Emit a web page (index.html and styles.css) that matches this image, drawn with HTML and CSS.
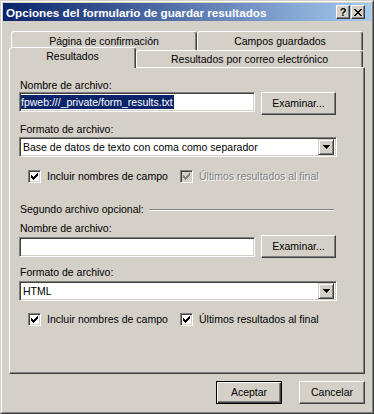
FILE: index.html
```html
<!DOCTYPE html>
<html>
	<head>
		<meta charset="utf-8">
		<title>Opciones del formulario de guardar resultados</title>
		<link rel="stylesheet" href="styles.css">
	</head>
	<body>
		<div class="window">
			<div class="frame">
				<div class="titlebar">
					<span class="title">Opciones del formulario de guardar resultados</span>
					<div class="caption-btns">
						<span class="cbtn help">?</span>
						<span class="cbtn close">
							<svg width="8" height="7" viewBox="0 0 8 7"><path d="M0 0h2v1H0z M6 0h2v1H6z M1 1h2v1H1z M5 1h2v1H5z M2 2h4v1H2z M3 3h2v1H3z M2 4h4v1H2z M1 5h2v1H1z M5 5h2v1H5z M0 6h2v1H0z M6 6h2v1H6z" fill="#000"/></svg>
						</span>
					</div>
				</div>
				<div class="client">
					<div class="tab-row back">
						<div class="tab w-conf">Página de confirmación</div>
						<div class="tab w-campos">Campos guardados</div>
					</div>
					<div class="tab-row front">
						<div class="tab selected w-res">Resultados</div>
						<div class="tab w-correo">Resultados por correo electrónico</div>
					</div>
					<div class="panel">
						<div class="label first">Nombre de archivo:</div>
						<div class="field-row">
							<div class="edit"><span class="sel">fpweb:///_private/form_results.txt</span></div>
							<button class="btn browse">Examinar...</button>
						</div>
						<div class="label">Formato de archivo:</div>
						<div class="combo">
							<span class="combo-text">Base de datos de texto con coma como separador</span>
							<span class="combo-btn"><svg width="7" height="4" viewBox="0 0 7 4"><path d="M0 0h7v1H0z M1 1h5v1H1z M2 2h3v1H2z M3 3h1v1H3z" fill="#000"/></svg></span>
						</div>
						<div class="checks">
							<div class="check-item">
								<span class="check"><svg width="7" height="7" viewBox="0 0 7 7"><path d="M0 2h1v3H0z M1 3h1v3H1z M2 4h1v3H2z M3 3h1v3H3z M4 2h1v3H4z M5 1h1v3H5z M6 0h1v3H6z"/></svg></span>
								<span>Incluir nombres de campo</span>
							</div>
							<div class="check-item disabled">
								<span class="check"><svg width="7" height="7" viewBox="0 0 7 7"><path d="M0 2h1v3H0z M1 3h1v3H1z M2 4h1v3H2z M3 3h1v3H3z M4 2h1v3H4z M5 1h1v3H5z M6 0h1v3H6z"/></svg></span>
								<span>Últimos resultados al final</span>
							</div>
						</div>

						<div class="group-head">
							<span>Segundo archivo opcional:</span>
							<span class="etched"></span>
						</div>
						<div class="label second">Nombre de archivo:</div>
						<div class="field-row">
							<div class="edit lower"></div>
							<button class="btn browse">Examinar...</button>
						</div>
						<div class="label">Formato de archivo:</div>
						<div class="combo lower">
							<span class="combo-text">HTML</span>
							<span class="combo-btn"><svg width="7" height="4" viewBox="0 0 7 4"><path d="M0 0h7v1H0z M1 1h5v1H1z M2 2h3v1H2z M3 3h1v1H3z" fill="#000"/></svg></span>
						</div>
						<div class="checks last">
							<div class="check-item">
								<span class="check"><svg width="7" height="7" viewBox="0 0 7 7"><path d="M0 2h1v3H0z M1 3h1v3H1z M2 4h1v3H2z M3 3h1v3H3z M4 2h1v3H4z M5 1h1v3H5z M6 0h1v3H6z"/></svg></span>
								<span>Incluir nombres de campo</span>
							</div>
							<div class="check-item">
								<span class="check"><svg width="7" height="7" viewBox="0 0 7 7"><path d="M0 2h1v3H0z M1 3h1v3H1z M2 4h1v3H2z M3 3h1v3H3z M4 2h1v3H4z M5 1h1v3H5z M6 0h1v3H6z"/></svg></span>
								<span>Últimos resultados al final</span>
							</div>
						</div>
					</div>
					<div class="actions">
						<button class="btn default">Aceptar</button>
						<button class="btn">Cancelar</button>
					</div>
				</div>
			</div>
		</div>
	</body>
</html>
```

FILE: styles.css
```css
*{
	margin: 0;
	padding: 0;
	box-sizing: border-box;
}
body{
	width: 374px;
	height: 414px;
	background: #d4d0c8;
	font-family: "Liberation Sans", Arial, sans-serif;
	font-size: 10.5px;
	line-height: 13px;
	color: #000;
}
/* window frame */
.window{
	width: 374px;
	height: 414px;
	border: 1px solid;
	border-color: #d4d0c8 #404040 #404040 #d4d0c8;
}
.frame{
	height: 100%;
	border: 1px solid;
	border-color: #fff #808080 #808080 #fff;
	padding: 1px;
	display: flex;
	flex-direction: column;
}
.titlebar{
	height: 18px;
	flex: none;
	display: flex;
	align-items: center;
	padding: 0 6px 0 3px;
	background: linear-gradient(to right, #0a246a, #a6caf0);
}
.title{
	flex: 1;
	color: #fff;
	font-weight: bold;
	font-size: 11.7px;
	white-space: nowrap;
}
.caption-btns{
	display: flex;
	gap: 1px;
}
.cbtn{
	width: 14px;
	height: 14px;
	display: flex;
	align-items: center;
	justify-content: center;
	background: #d4d0c8;
	border: 1px solid;
	border-color: #fff #404040 #404040 #fff;
	box-shadow: inset -1px -1px #808080;
}
.cbtn.help{
	font-weight: bold;
	font-size: 11px;
	line-height: 12px;
}
/* client area */
.client{
	flex: 1;
	padding: 10px 6px 0 6px;
}
.tab-row{
	display: flex;
}
.tab-row.back{
	height: 19px;
	margin-left: 2px;
}
.tab-row.front{
	height: 17px;
	position: relative;
	z-index: 1;
}
.tab{
	height: 100%;
	display: flex;
	align-items: center;
	justify-content: center;
	background: #d4d0c8;
	border: 1px solid;
	border-bottom: none;
	border-color: #fff #404040 #fff #fff;
	border-radius: 3px 3px 0 0;
	box-shadow: inset -1px 0 #808080;
	white-space: nowrap;
}
.w-conf{ width: 186px; }
.w-campos{ width: 166px; }
.w-res{ width: 127px; }
.w-correo{ width: 227px; }
.tab.selected{
	height: 21px;
	margin-top: -3px;
	padding-bottom: 3px;
}
.panel{
	height: 307px;
	padding: 0 0 0 9px;
	border: 1px solid;
	border-color: #fff #404040 #404040 #fff;
	box-shadow: inset -1px -1px #808080;
}
.label{
	padding-left: 1px;
	margin-top: 8px;
}
.label.first{
	margin-top: 11px;
}
.label.second{
	margin-top: 6px;
}
.field-row{
	display: flex;
	align-items: flex-start;
	gap: 6px;
}
/* sunken controls */
.edit,.combo,.check{
	background: #fff;
	border: 1px solid;
	border-color: #808080 #fff #fff #808080;
	box-shadow: inset 1px 1px #404040, inset -1px -1px #d4d0c8;
}
.edit{
	width: 236px;
	height: 20px;
	display: flex;
	align-items: center;
	padding-left: 1px;
}
.edit.lower{
	margin-top: 2px;
}
.sel{
	background: #0a246a;
	color: #fff;
	line-height: 14px;
	padding-right: 1px;
}
.btn{
	font: inherit;
	color: #000;
	background: #d4d0c8;
	border: 1px solid;
	border-color: #fff #404040 #404040 #fff;
	box-shadow: inset -1px -1px #808080;
	height: 23px;
}
.btn.browse{
	width: 75px;
}
.combo{
	width: 318px;
	height: 20px;
	margin-top: 1px;
	display: flex;
	align-items: center;
	padding: 2px 2px 2px 3px;
}
.combo.lower{
	margin-top: 2px;
}
.combo-text{
	flex: 1;
}
.combo-btn{
	width: 16px;
	height: 16px;
	display: flex;
	align-items: center;
	justify-content: center;
	background: #d4d0c8;
	border: 1px solid;
	border-color: #d4d0c8 #404040 #404040 #d4d0c8;
	box-shadow: inset 1px 1px #fff, inset -1px -1px #808080;
}
/* checkboxes */
.checks{
	display: flex;
	padding-left: 9px;
	margin-top: 13px;
}
.checks.last{
	margin-top: 12px;
}
.check-item{
	width: 152px;
	display: flex;
	align-items: center;
	gap: 6px;
}
.check{
	width: 13px;
	height: 13px;
	flex: none;
	display: flex;
	align-items: center;
	justify-content: center;
}
.check svg{
	fill: #000;
}
.check-item.disabled{
	color: #808080;
	text-shadow: 1px 1px 0 #fff;
}
.check-item.disabled .check{
	background: #d4d0c8;
}
.check-item.disabled .check svg{
	fill: #808080;
}
.group-head{
	display: flex;
	align-items: center;
	gap: 5px;
	margin-top: 20px;
	padding-left: 1px;
	margin-right: 30px;
}
.etched{
	flex: 1;
	height: 2px;
	border-top: 1px solid #808080;
	border-bottom: 1px solid #fff;
}
.actions{
	display: flex;
	justify-content: flex-end;
	gap: 17px;
	margin-top: 7px;
}
.actions .btn{
	width: 66px;
}
.btn.default{
	border: 1px solid #000;
	box-shadow: inset 1px 1px #fff, inset -1px -1px #404040, inset -2px -2px #808080;
}
```
